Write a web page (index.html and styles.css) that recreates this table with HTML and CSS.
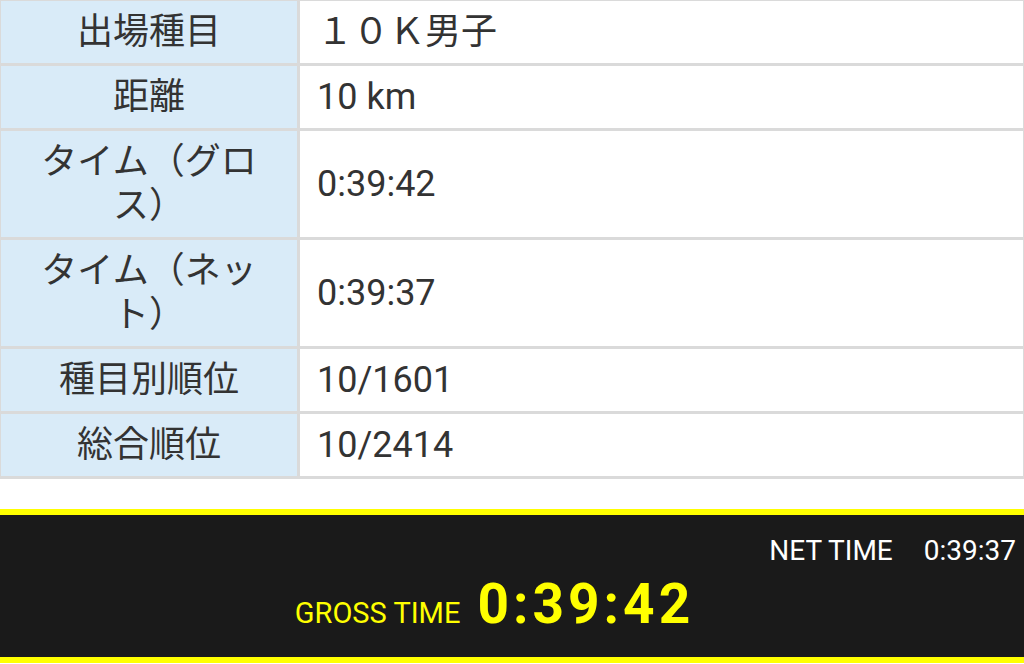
FILE: index.html
```html
<!DOCTYPE html>
<html lang="ja">
  <head>
    <meta charset="UTF-8" />
    <meta name="viewport" content="width=device-width, initial-scale=1.0" />
    <title>記録証</title>
    <link rel="stylesheet" href="styles.css">
  </head>
  <body>
    <table class="result-table">
      <tr>
        <th>出場種目</th>
        <td>１０Ｋ男子</td>
      </tr>
      <tr>
        <th>距離</th>
        <td>10 km</td>
      </tr>
      <tr>
        <th>タイム（グロス）</th>
        <td>0:39:42</td>
      </tr>
      <tr>
        <th>タイム（ネット）</th>
        <td>0:39:37</td>
      </tr>
      <tr>
        <th>種目別順位</th>
        <td>10/1601</td>
      </tr>
      <tr>
        <th>総合順位</th>
        <td>10/2414</td>
      </tr>
    </table>

    <div class="time-board">
      <div class="net-row">
        <span class="net-label">NET TIME</span>
        <span class="net-value">0:39:37</span>
      </div>
      <div class="gross-row">
        <span class="gross-label">GROSS TIME</span>
        <span class="gross-value">0:39:42</span>
      </div>
    </div>
  </body>
</html>
```

FILE: styles.css
```css
body {
  margin: 0;
  padding: 0;
  background-color: #fff;
  font-family: Roboto, "Noto Sans CJK JP", sans-serif;
  color: #333;
  overflow: hidden;
}
.result-table {
  border-collapse: collapse;
  table-layout: fixed;
  width: calc(100% + 4px);
  margin: -2px 0 0 -2px;
  font-size: 36px;
  line-height: 44px;
}
.result-table th,
.result-table td {
  border: 3px solid #dadada;
  padding: 9px 13px 9px 17px;
  font-weight: normal;
}
.result-table th {
  width: 246px;
  padding: 9px 25px;
  background-color: #d9ebf8;
  text-align: center;
}
.result-table td {
  background-color: #fff;
  text-align: left;
}
.time-board {
  margin-top: 30px;
  height: 142px;
  background-color: #1a1a1a;
  border-top: 6px solid #ffff00;
  border-bottom: 6px solid #ffff00;
}
.net-row {
  display: flex;
  justify-content: flex-end;
  align-items: baseline;
  padding: 20px 8px 0 0;
  color: #fff;
  font-size: 28px;
  line-height: 32px;
}
.net-value {
  margin-left: 31px;
}
.gross-row {
  display: flex;
  justify-content: center;
  align-items: baseline;
  padding-right: 35px;
  margin-top: 7px;
  color: #ffff00;
}
.gross-label {
  font-size: 29px;
  margin-right: 17px;
}
.gross-value {
  font-size: 55px;
  font-weight: bold;
  letter-spacing: 4px;
  line-height: 60px;
}
```
